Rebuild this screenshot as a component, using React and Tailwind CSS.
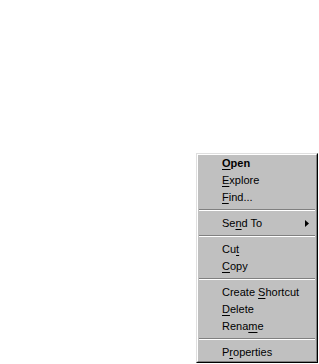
import React from "react";

function Item({ pre, u, post, bold, arrow }) {
  return (
    <div className="h-[17px] flex items-center pl-[24px] pr-[8px] relative">
      <span className={(bold ? "font-bold " : "") + "leading-none"}>
        {pre}
        <span className="underline underline-offset-[2px]">{u}</span>
        {post}
      </span>
      {arrow && (
        <svg className="absolute right-[7px] top-[5px]" width="4" height="7" viewBox="0 0 4 7">
          <path d="M0 0 L4 3.5 L0 7 Z" fill="#000" />
        </svg>
      )}
    </div>
  );
}

function Sep() {
  return (
    <div className="h-[9px] pt-[3px] px-[1px]">
      <div className="h-[1px] bg-[#808080]" />
      <div className="h-[1px] bg-white" />
    </div>
  );
}

export default function App() {
  return (
    <div className="relative w-[319px] h-[364px] bg-white overflow-hidden">
      <div className="absolute left-[196px] top-[153px] w-[122px] border border-t-[#dfdfdf] border-l-[#dfdfdf] border-r-black border-b-black">
        <div className="border border-t-white border-l-white border-r-[#808080] border-b-[#808080] bg-[#c0c0c0] text-black text-[11px] font-['Liberation_Sans',Arial,sans-serif]">
          <Item pre="" u="O" post="pen" bold />
          <Item pre="" u="E" post="xplore" />
          <Item pre="" u="F" post="ind..." />
          <Sep />
          <Item pre="Se" u="n" post="d To" arrow />
          <Sep />
          <Item pre="Cu" u="t" post="" />
          <Item pre="" u="C" post="opy" />
          <Sep />
          <Item pre="Create " u="S" post="hortcut" />
          <Item pre="" u="D" post="elete" />
          <Item pre="Rena" u="m" post="e" />
          <Sep />
          <Item pre="P" u="r" post="operties" />
        </div>
      </div>
    </div>
  );
}
